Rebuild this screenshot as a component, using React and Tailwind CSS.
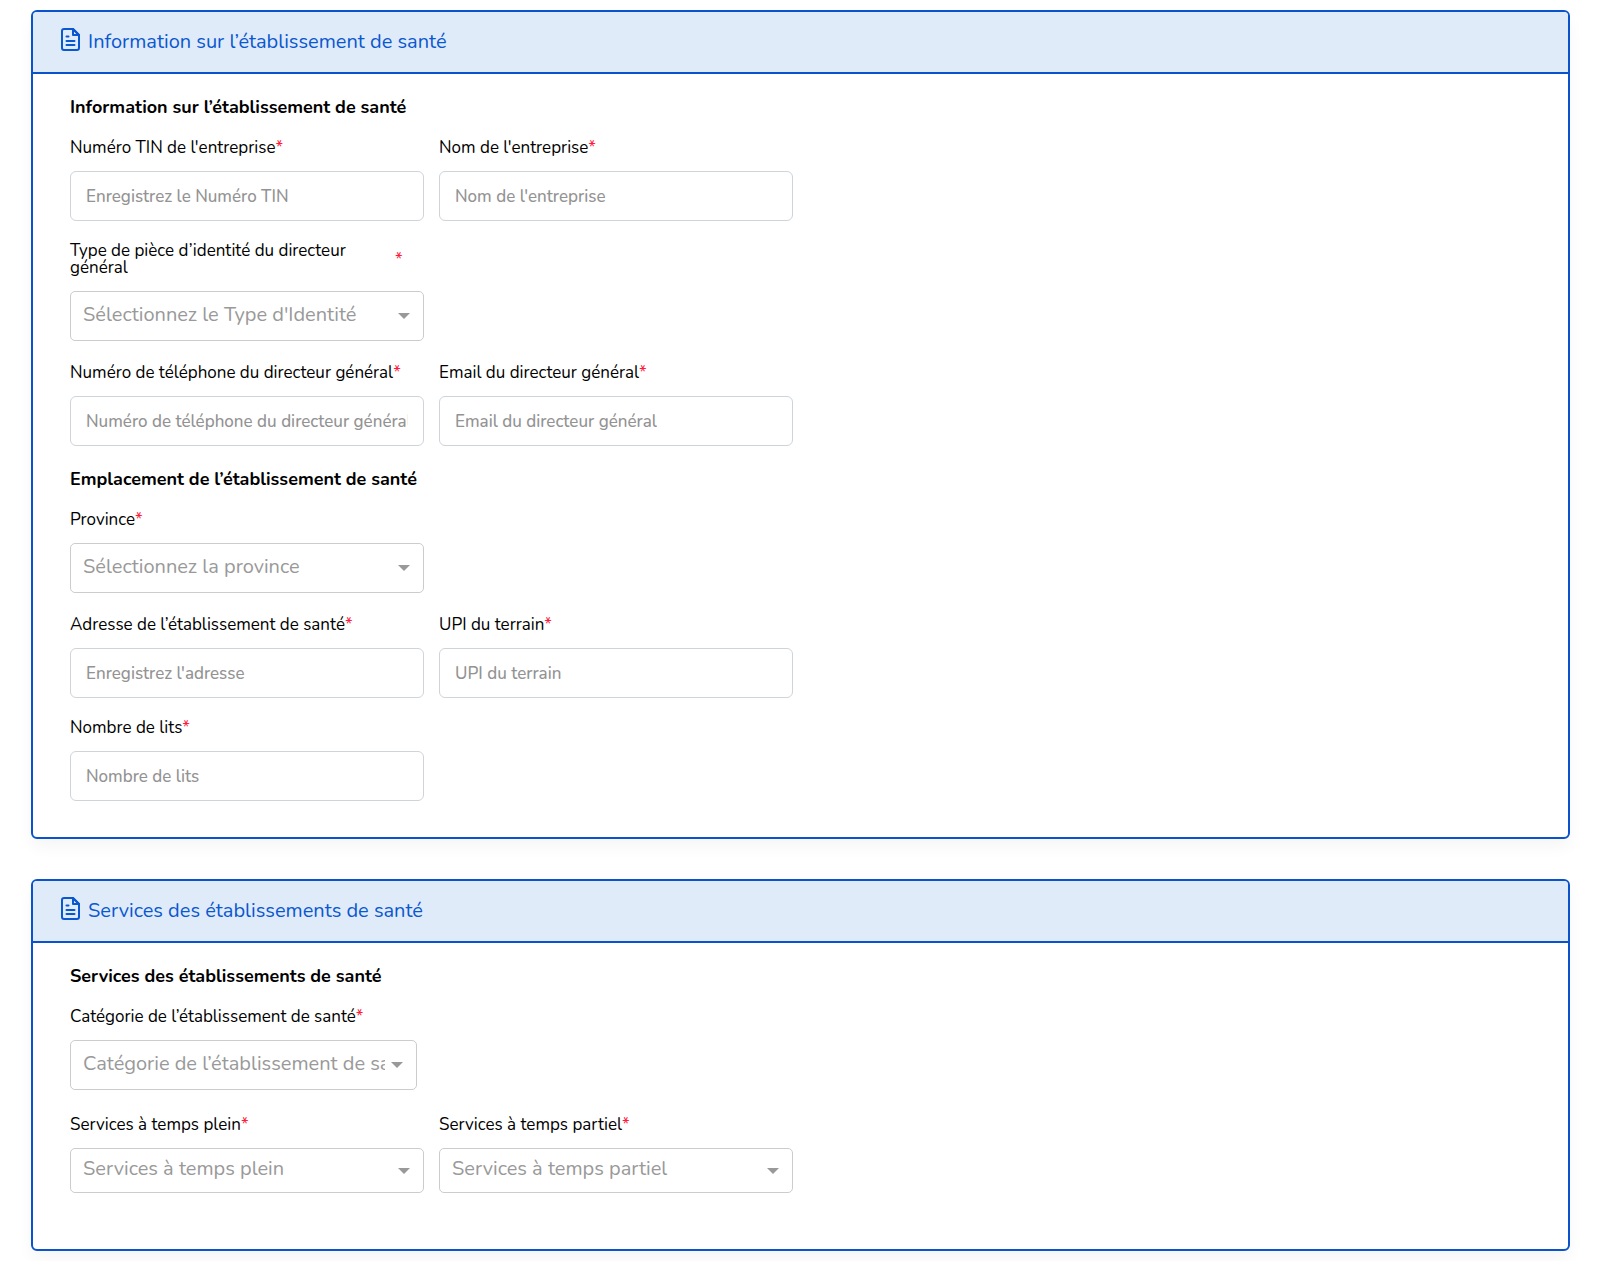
function FileIcon() {
  return (
    <svg viewBox="0 0 19 23" className="mb-1 h-[23px] w-[19px] shrink-0" fill="none" stroke="currentColor" strokeWidth="2" strokeLinejoin="round" aria-hidden="true">
      <path d="M12 1H3a2 2 0 0 0-2 2v17a2 2 0 0 0 2 2h13a2 2 0 0 0 2-2V7z" />
      <path d="M12 1v6h6z" />
      <path d="M5.500 8.500h2M5.500 13h8M5.500 17h8" strokeLinecap="round" />
    </svg>
  );
}

function Card({ title, className, children }) {
  return (
    <section className="rounded-md border-2 border-[#0a53cc] bg-white shadow-[0_8px_16px_rgba(0,0,0,0.04)]">
      <header className="flex h-[62px] items-center gap-2 rounded-t border-b-2 border-[#0a53cc] bg-[#e0ebf9] px-7 pb-px text-[#0a58d0]">
        <FileIcon />
        <h2 className="text-[20px] leading-6">{title}</h2>
      </header>
      <div className={`flex flex-col gap-[21px] px-[37px] pt-[22px] ${className}`}>{children}</div>
    </section>
  );
}

function Heading({ children }) {
  return <h3 className="text-[18px] leading-[22px] font-bold">{children}</h3>;
}

function Row({ className = "", children }) {
  return <div className={`flex flex-wrap gap-[15px] ${className}`}>{children}</div>;
}

function Label({ id, children }) {
  return (
    <label htmlFor={id} className="mb-[15px] flex items-center text-[17px] leading-[17px]">
      <span className="max-w-[325px]">{children}</span>
      <span className="text-[#ff1a3c]">*</span>
    </label>
  );
}

function TextField({ id, label, placeholder, type = "text" }) {
  return (
    <div className="w-[354px]">
      <Label id={id}>{label}</Label>
      <input
        id={id}
        type={type}
        placeholder={placeholder}
        className="block h-[50px] w-full rounded-md border border-[#ced4da] bg-white px-[15px] text-[17px] font-medium placeholder:text-[#939393]"
      />
    </div>
  );
}

function SelectField({ id, label, placeholder, width = "w-[354px]", height = "h-[50px]" }) {
  return (
    <div className={width}>
      <Label id={id}>{label}</Label>
      <div className="relative">
        <select
          id={id}
          defaultValue=""
          className={`block w-full appearance-none rounded-[5px] border border-[#ccc] bg-white pr-[31px] pb-[3px] pl-3 text-[20px] text-[#999] ${height}`}
        >
          <option value="">{placeholder}</option>
        </select>
        <svg viewBox="0 0 12 6" className="pointer-events-none absolute top-1/2 right-[14px] h-[6px] w-[12px] -translate-y-1/2" fill="#999" aria-hidden="true">
          <path d="M0 0h12L6 6z" />
        </svg>
      </div>
    </div>
  );
}

export default function App() {
  return (
    <main className="flex flex-col gap-10 bg-white py-[10px] pr-[30px] pl-[31px] font-['Nunito','Lato',sans-serif] text-black">
      <Card title="Information sur l’établissement de santé" className="pb-9">
        <Heading>Information sur l’établissement de santé</Heading>
        <Row>
          <TextField id="tin" label="Numéro TIN de l'entreprise" placeholder="Enregistrez le Numéro TIN" />
          <TextField id="company" label="Nom de l'entreprise" placeholder="Nom de l'entreprise" />
        </Row>
        <Row className="pb-[2px]">
          <SelectField id="idType" label="Type de pièce d’identité du directeur général" placeholder="Sélectionnez le Type d'Identité" />
        </Row>
        <Row className="pb-px">
          <TextField id="phone" type="tel" label="Numéro de téléphone du directeur général" placeholder="Numéro de téléphone du directeur général" />
          <TextField id="email" type="email" label="Email du directeur général" placeholder="Email du directeur général" />
        </Row>
        <Heading>Emplacement de l’établissement de santé</Heading>
        <Row className="pb-[2px]">
          <SelectField id="province" label="Province" placeholder="Sélectionnez la province" />
        </Row>
        <Row>
          <TextField id="address" label="Adresse de l’établissement de santé" placeholder="Enregistrez l'adresse" />
          <TextField id="upi" label="UPI du terrain" placeholder="UPI du terrain" />
        </Row>
        <Row>
          <TextField id="beds" label="Nombre de lits" placeholder="Nombre de lits" />
        </Row>
      </Card>

      <Card title="Services des établissements de santé" className="pb-14">
        <Heading>Services des établissements de santé</Heading>
        <Row className="pb-[5px]">
          <SelectField id="category" label="Catégorie de l’établissement de santé" placeholder="Catégorie de l’établissement de santé" width="w-[347px]" />
        </Row>
        <Row>
          <SelectField id="fullTime" label="Services à temps plein" placeholder="Services à temps plein" height="h-[45px]" />
          <SelectField id="partTime" label="Services à temps partiel" placeholder="Services à temps partiel" height="h-[45px]" />
        </Row>
      </Card>
    </main>
  );
}
